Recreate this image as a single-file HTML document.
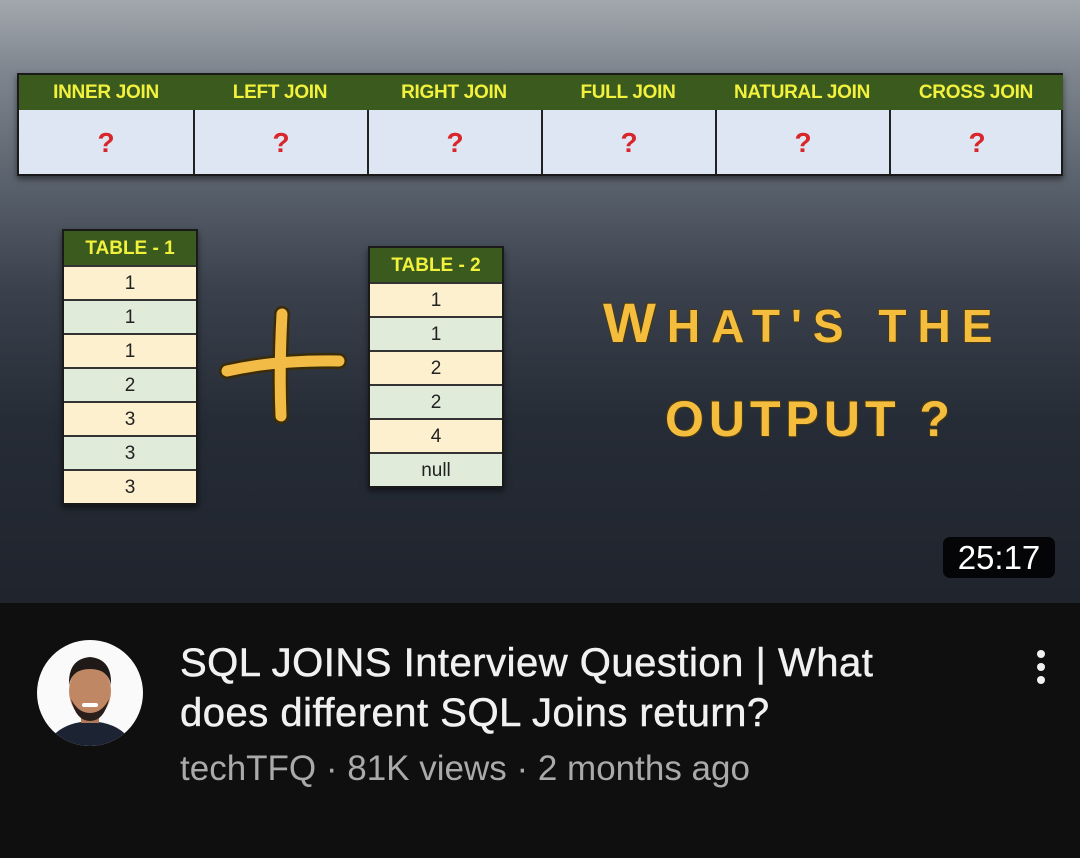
<!DOCTYPE html>
<html><head><meta charset="utf-8"><style>
*{margin:0;padding:0;box-sizing:border-box}
body{width:1080px;height:858px;overflow:hidden;background:#0f0f0f;font-family:"Liberation Sans",sans-serif;position:relative}
.thumb{position:absolute;left:0;top:0;width:1080px;height:603px;background:linear-gradient(180deg,#a3a8ae 0%,#7e858e 12%,#5a626d 30%,#3a414c 48%,#262c36 70%,#1f242d 100%)}
.ab{position:absolute}
.top{left:17px;top:73px;width:1046px;height:103px;border:2px solid #1a1a1a;background:#dde6f2;box-shadow:0 3px 6px rgba(0,0,0,.5)}
.top .h{position:absolute;top:0;height:35px;width:174px;background:#3b5a1e;color:#f2f23c;font:bold 19px "Liberation Sans Narrow","Liberation Sans",sans-serif;text-align:center;line-height:36px;letter-spacing:-.3px}
.top .c{position:absolute;top:35px;height:64px;width:174px;border-left:2px solid #222;color:#d8262b;font:bold 28px "Liberation Sans",sans-serif;text-align:center;line-height:66px}
.tb{border:2px solid #1a1a1a;width:136px;box-shadow:0 3px 6px rgba(0,0,0,.5);background:#fdf0cf}
.tb .hd{height:34px;background:#3b5a1e;color:#f2f23c;font:bold 19px "Liberation Sans Narrow","Liberation Sans",sans-serif;text-align:center;line-height:35px}
.tb .r{height:34px;border-top:2px solid #333;text-align:center;font:19px "Liberation Sans",sans-serif;color:#222;line-height:33px}
.y{background:#fdf0cf}.g{background:#e1ebda}
.gold{color:#f5bd3e;font-weight:bold;font-family:"Liberation Sans",sans-serif;text-shadow:1px 1px 0 #4a3a10,-1px -1px 0 #4a3a10}
</style></head><body>
<div class="thumb"></div>
<div class="ab top">
<div class="h" style="left:0">INNER JOIN</div><div class="h" style="left:174px">LEFT JOIN</div><div class="h" style="left:348px">RIGHT JOIN</div><div class="h" style="left:522px">FULL JOIN</div><div class="h" style="left:696px">NATURAL JOIN</div><div class="h" style="left:870px">CROSS JOIN</div>
<div class="c" style="left:0;border-left:none">?</div><div class="c" style="left:174px">?</div><div class="c" style="left:348px">?</div><div class="c" style="left:522px">?</div><div class="c" style="left:696px">?</div><div class="c" style="left:870px">?</div>
</div>
<div class="ab tb" style="left:62px;top:229px">
<div class="hd">TABLE - 1</div>
<div class="r y">1</div><div class="r g">1</div><div class="r y">1</div><div class="r g">2</div><div class="r y">3</div><div class="r g">3</div><div class="r y">3</div>
</div>
<div class="ab tb" style="left:368px;top:246px">
<div class="hd">TABLE - 2</div>
<div class="r y">1</div><div class="r g">1</div><div class="r y">2</div><div class="r g">2</div><div class="r y">4</div><div class="r g">null</div>
</div>
<svg class="ab" style="left:215px;top:300px" width="135" height="130"><g stroke="#3a2c08" stroke-width="16" stroke-linecap="round" fill="none"><path d="M12 71 Q60 60 124 61"/><path d="M67 14 Q64 70 66 116"/></g><g stroke="#f2bb45" stroke-width="11" stroke-linecap="round" fill="none"><path d="M12 71 Q60 60 124 61"/><path d="M67 14 Q64 70 66 116"/></g></svg>
<div class="ab gold" style="left:603px;top:290px;font-size:56px;letter-spacing:11px;white-space:nowrap">W<span style="font-size:46px">HAT'S THE</span></div>
<div class="ab gold" style="left:665px;top:390px;font-size:50px;letter-spacing:5px;white-space:nowrap">OUTPUT ?</div>
<div class="ab" style="left:943px;top:537px;width:112px;height:41px;background:rgba(0,0,0,.85);border-radius:7px;color:#fff;font-size:33px;text-align:center;line-height:41px">25:17</div>
<svg class="ab" style="left:36px;top:639px" width="108" height="108"><defs><clipPath id="cp"><circle cx="54" cy="54" r="53"/></clipPath></defs><g clip-path="url(#cp)"><rect width="108" height="108" fill="#fafafa"/><path d="M10 108 Q20 84 54 82 Q88 84 98 108Z" fill="#1c2333"/><rect x="45" y="68" width="18" height="16" fill="#b07a5a"/><ellipse cx="54" cy="52" rx="21" ry="27" fill="#c08765"/><path d="M33 46 Q32 20 54 18 Q76 20 75 46 Q72 30 54 30 Q36 30 33 46Z" fill="#1f1a18"/><path d="M35 60 Q40 82 54 82 Q68 82 73 60 Q66 74 54 74 Q42 74 35 60Z" fill="#2a1f1a"/><rect x="46" y="64" width="16" height="4" rx="2" fill="#fff"/></g></svg>
<div class="ab" style="left:180px;top:638px;color:#f1f1f1;font-size:40px;line-height:50px;letter-spacing:.5px;-webkit-text-stroke:.5px #f1f1f1;white-space:nowrap">SQL JOINS Interview Question | What<br>does different SQL Joins return?</div>
<div class="ab" style="left:180px;top:749px;color:#aaaaaa;font-size:35px;white-space:nowrap">techTFQ · 81K views · 2 months ago</div>
<div class="ab" style="left:1037px;top:650px;width:8px;height:8px;border-radius:50%;background:#f1f1f1"></div>
<div class="ab" style="left:1037px;top:663px;width:8px;height:8px;border-radius:50%;background:#f1f1f1"></div>
<div class="ab" style="left:1037px;top:676px;width:8px;height:8px;border-radius:50%;background:#f1f1f1"></div>
</body></html>
